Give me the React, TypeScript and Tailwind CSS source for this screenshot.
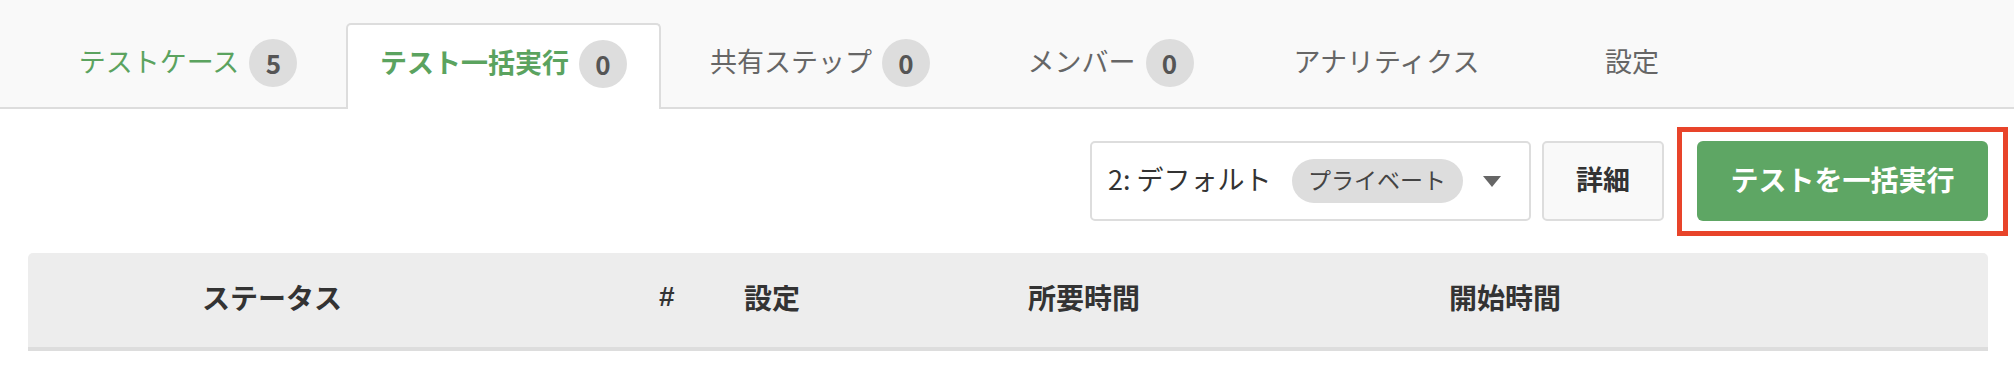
import React from 'react'

type Tab = { label: string; count?: number; width: string; active?: boolean; tone: 'green' | 'gray' }

const tabs: Tab[] = [
  { label: 'テストケース', count: 5, width: 'w-[286px]', tone: 'green' },
  { label: 'テスト一括実行', count: 0, width: 'w-[315px]', active: true, tone: 'green' },
  { label: '共有ステップ', count: 0, width: 'w-[288px]', tone: 'gray' },
  { label: 'メンバー', count: 0, width: 'w-[263px]', tone: 'gray' },
  { label: 'アナリティクス', width: 'w-[259px]', tone: 'gray' },
  { label: '設定', width: 'w-[202px]', tone: 'gray' },
]

function Badge({ n }: { n: number }) {
  return (
    <span className="ml-[10px] flex h-[48px] w-[48px] items-center justify-center rounded-full bg-[#dddddd] text-[26px] font-bold leading-none text-[#555555]">
      {n}
    </span>
  )
}

function TabItem({ tab }: { tab: Tab }) {
  return (
    <div
      className={`-mb-[2px] flex h-[86px] shrink-0 items-center justify-center pb-[6px] ${tab.width} ${
        tab.active ? 'rounded-t-[5px] border-2 border-b-0 border-[#dddddd] bg-white' : ''
      }`}
    >
      <span
        className={`pb-[5px] text-[27px] leading-none ${tab.active ? 'font-bold' : ''} ${
          tab.tone === 'green' ? 'text-[#5ba35f]' : 'text-[#666666]'
        }`}
      >
        {tab.label}
      </span>
      {tab.count !== undefined && <Badge n={tab.count} />}
    </div>
  )
}

export default function App() {
  return (
    <div className="h-[391px] w-[2014px] overflow-hidden bg-white font-['Noto_Sans_CJK_JP','Noto_Sans',sans-serif] text-[#333333]">
      {/* tabs */}
      <div className="flex h-[109px] items-end gap-[15px] border-b-2 border-[#dddddd] bg-[#f9f9f9] pl-[45px]">
        {tabs.map((t) => (
          <TabItem key={t.label} tab={t} />
        ))}
      </div>

      <div className="pl-[28px] pr-[26px]">
        {/* toolbar */}
        <div className="mt-[32px] flex items-center justify-end">
          <div className="flex h-[80px] w-[441px] items-center rounded-[5px] border-2 border-[#dddddd] bg-white pl-[16px]">
            <span className="pb-[5px] text-[27px] leading-none text-[#333333]">2: デフォルト</span>
            <span className="ml-[20px] flex h-[44px] w-[171px] items-center justify-center rounded-full bg-[#dddddd] pb-[3px] text-[23px] leading-none text-[#444444]">
              プライベート
            </span>
            <svg className="ml-[20px]" width="18" height="11" viewBox="0 0 18 11">
              <path d="M0 0 H18 L9 11 Z" fill="#666666" />
            </svg>
          </div>
          <button className="ml-[11px] flex h-[80px] w-[122px] items-center justify-center rounded-[5px] border-2 border-[#dddddd] bg-[#f9f9f9] pb-[5px] text-[27px] font-bold leading-none text-[#333333]">
            詳細
          </button>
          <div className="relative ml-[33px]">
            <button className="flex h-[80px] w-[291px] items-center justify-center rounded-[6px] bg-[#5ea664] pb-[5px] text-[28px] font-bold leading-none text-white">
              テストを一括実行
            </button>
            <span className="pointer-events-none absolute -bottom-[15px] -left-[20px] -right-[20px] -top-[14px] border-[5px] border-[#e8442a]" />
          </div>
        </div>

        {/* table header */}
        <div className="mt-[32px] flex h-[98px] items-center rounded-t-[5px] border-b-4 border-[#dddddd] bg-[#ededed] pb-[6px] text-[28px] font-bold leading-none text-[#333333]">
          <div className="w-[631px] pl-[174px]">ステータス</div>
          <div className="w-[85px] font-['Liberation_Sans',sans-serif]">#</div>
          <div className="w-[284px]">設定</div>
          <div className="w-[421px]">所要時間</div>
          <div>開始時間</div>
        </div>
      </div>
    </div>
  )
}
